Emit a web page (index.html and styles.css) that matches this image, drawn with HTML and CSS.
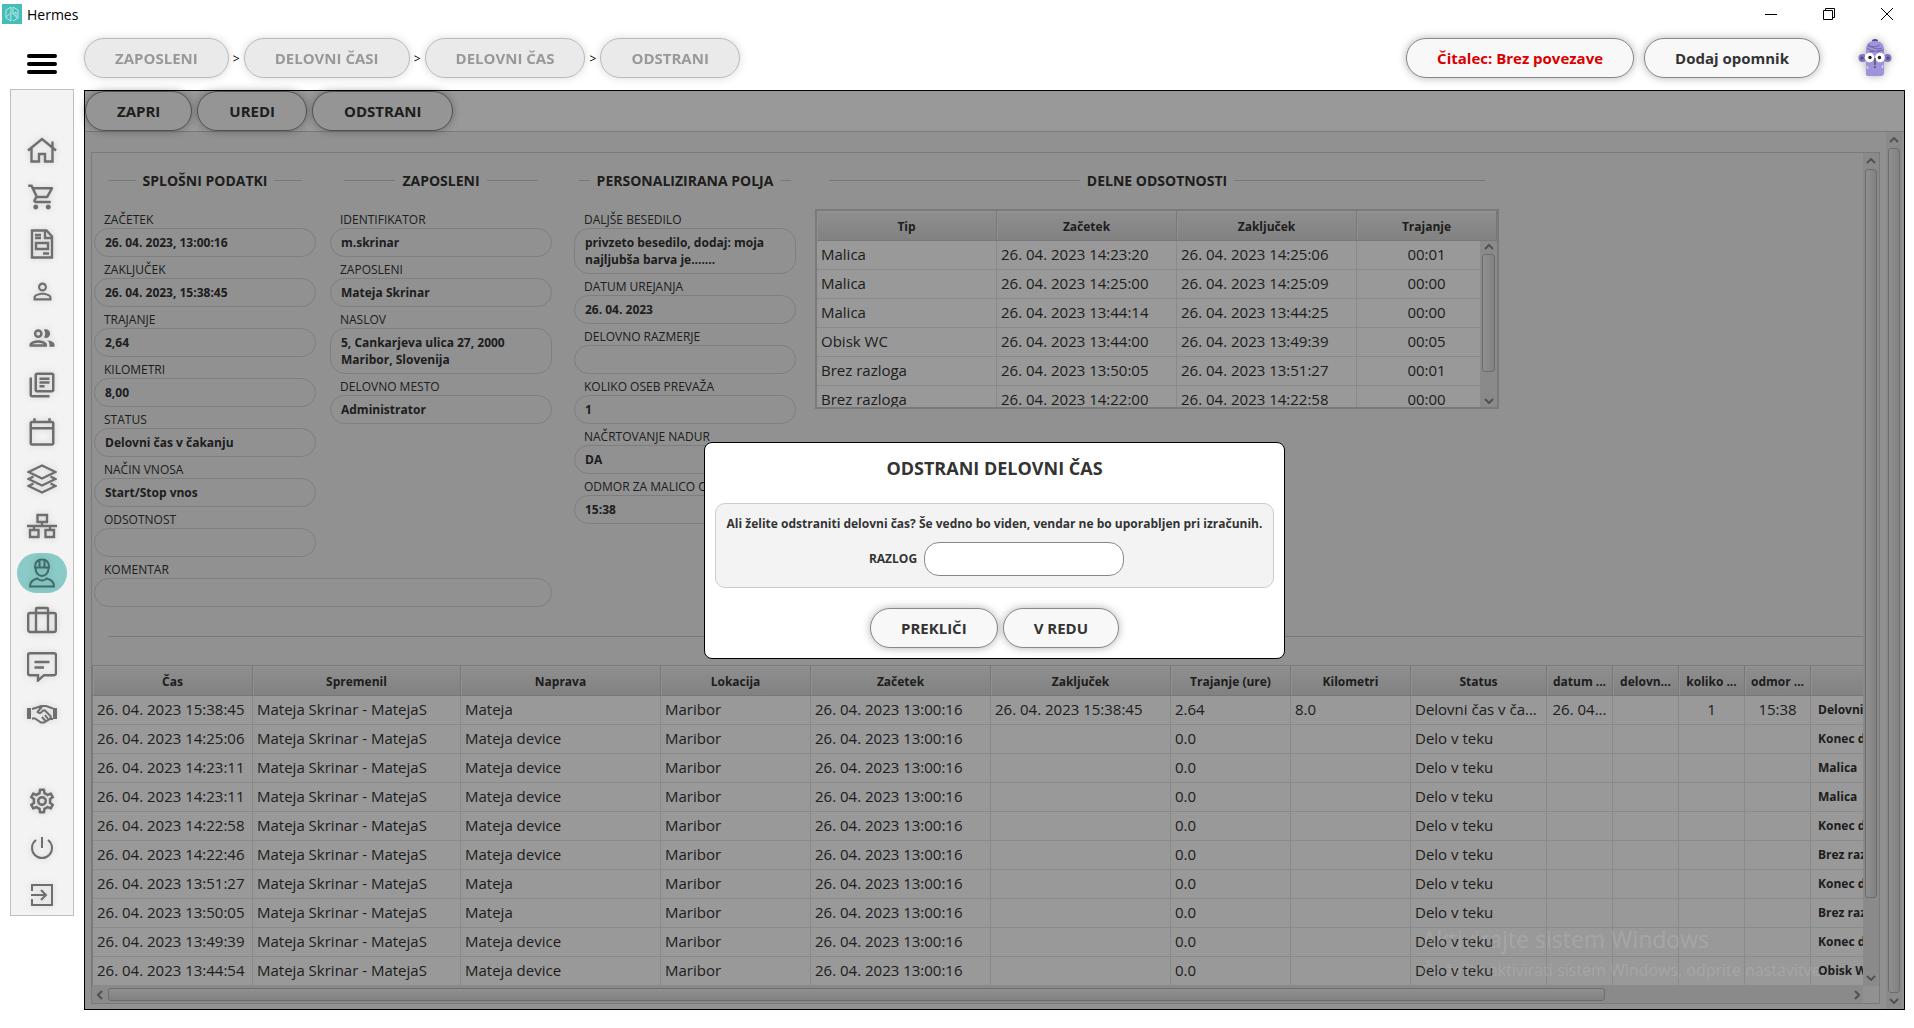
FILE: index.html
```
<!DOCTYPE html>
<html lang="sl">
<head>
  <meta charset="UTF-8">
  <meta name="viewport" content="width=device-width, initial-scale=1.0">
  <title>Hermes</title>
  <link rel="stylesheet" href="styles.css">
</head>
<body>
  <div class="titlebar">
    <svg class="logo" viewBox="0 0 20 20"><rect width="20" height="20" fill="#45bdb8"/><path d="M9 3 4 6v8l5 3V3zM11 3l5 3v8l-5 3M11 3v7l5 4M4 13l5-4M11 10l3-2v5" fill="none" stroke="#b9e8e5" stroke-width="1"/></svg>
    <span class="app-name">Hermes</span>
    <div class="window-buttons">
      <button type="button" aria-label="Pomanjšaj"><svg viewBox="0 0 14 14"><path d="M1 7.500h12"/></svg></button>
      <button type="button" aria-label="Obnovi"><svg viewBox="0 0 14 14"><path d="M1.500 3.500h9v9h-9zM3.500 3.500v-2h9v9h-2"/></svg></button>
      <button type="button" aria-label="Zapri okno"><svg viewBox="0 0 14 14"><path d="M1 1l12 12M13 1L1 13"/></svg></button>
    </div>
  </div>

  <header class="topbar">
    <button type="button" class="burger" aria-label="Meni"><i></i><i></i><i></i></button>
    <nav class="crumbs">
      <button type="button" class="btn" disabled>ZAPOSLENI</button><span>&gt;</span>
      <button type="button" class="btn" disabled>DELOVNI ČASI</button><span>&gt;</span>
      <button type="button" class="btn" disabled>DELOVNI ČAS</button><span>&gt;</span>
      <button type="button" class="btn" disabled>ODSTRANI</button>
    </nav>
    <button type="button" class="btn alert">Čitalec: Brez povezave</button>
    <button type="button" class="btn">Dodaj opomnik</button>
    <svg class="avatar" viewBox="0 0 34 40">
      <ellipse cx="17" cy="3" rx="3" ry="2" fill="#51458a"/>
      <circle cx="4.500" cy="20" r="4" fill="#8076bd"/><circle cx="29.500" cy="20" r="4" fill="#8076bd"/>
      <circle cx="4" cy="20" r="1.500" fill="#4e4585"/><circle cx="30" cy="20" r="1.500" fill="#4e4585"/>
      <path d="M8 12C8 5 12 3 17 3s9 2 9 9v24q-1 2-3 2H11q-3 0-3-2z" fill="#9f94da"/>
      <path d="M10 8c5 2 10 0 12-1M9 10c6 5 12 3 17 2M10 6c4 4 9 6 14 4M11 14l5-1M19 14l4-2" fill="none" stroke="#665b9f" stroke-width="0.800"/>
      <circle cx="11.500" cy="19.500" r="4.800" fill="#fff"/><circle cx="22" cy="19.500" r="4.800" fill="#fff"/>
      <circle cx="12" cy="19.500" r="1.700" fill="#222"/><circle cx="21.500" cy="19.500" r="1.700" fill="#222"/>
      <path d="M17 20v7M16 29h2" stroke="#333" stroke-width="1"/>
      <path d="M9 28l1 3M25 27l-1 3" stroke="#d3ccf5" stroke-width="1.500"/>
    </svg>
  </header>

  <div class="layout">
    <nav class="sidebar">
      <a href="#" aria-label="Domov"><svg class="line" viewBox="0 0 30 30"><path d="M1 15.500 15 4l14 11.500M4.500 13.500v13H12V19h6v7.500h7.500v-13M25.500 6.500V12"/></svg></a>
      <a href="#" aria-label="Košarica"><svg viewBox="0 0 24 24"><path d="M15.550 13c.75 0 1.410-.41 1.750-1.030l3.580-6.490A.996.996 0 0 0 20.010 4H5.210l-.94-2H1v2h2l3.600 7.590-1.350 2.440C4.520 15.370 5.480 17 7 17h12v-2H7l1.100-2h7.450zM6.160 6h12.150l-2.760 5H8.530L6.160 6zM7 18c-1.100 0-1.990.9-1.990 2S5.900 22 7 22s2-.9 2-2-.9-2-2-2zm10 0c-1.100 0-1.990.9-1.990 2s.89 2 1.990 2 2-.9 2-2-.9-2-2-2z"/></svg></a>
      <a href="#" aria-label="Dokumenti"><svg class="line" viewBox="0 0 30 30"><path d="M5 1.500h14.500L25 7.500v21H5z"/><path d="M18 2v7h7M8 6h6M8 9h6M16 24.500h6" /><path d="M9 14h12v6H9z"/></svg></a>
      <a href="#" aria-label="Oseba"><svg class="small" viewBox="0 0 24 24"><path d="M12 5.900c1.160 0 2.100.94 2.100 2.100s-.94 2.100-2.100 2.100S9.900 9.160 9.900 8s.94-2.100 2.100-2.100m0 9c2.970 0 6.100 1.460 6.100 2.100v1.100H5.900V17c0-.64 3.130-2.100 6.100-2.100M12 4C9.790 4 8 5.790 8 8s1.790 4 4 4 4-1.790 4-4-1.790-4-4-4zm0 9c-2.670 0-8 1.340-8 4v3h16v-3c0-2.660-5.330-4-8-4z"/></svg></a>
      <a href="#" aria-label="Skupine"><svg viewBox="0 0 24 24"><path d="M9 13.750c-2.340 0-7 1.170-7 3.500V19h14v-1.750c0-2.330-4.660-3.500-7-3.500zM4.340 17c.84-.58 2.870-1.250 4.660-1.250s3.820.67 4.660 1.250H4.340zM9 12c1.930 0 3.500-1.570 3.500-3.500S10.930 5 9 5 5.500 6.570 5.500 8.500 7.070 12 9 12zm0-5c.83 0 1.500.67 1.500 1.500S9.830 10 9 10s-1.500-.67-1.500-1.500S8.170 7 9 7zm7.040 6.810c1.160.84 1.960 1.960 1.960 3.440V19h4v-1.750c0-2.020-3.500-3.170-5.960-3.440zM15 12c1.930 0 3.500-1.570 3.500-3.500S16.930 5 15 5c-.54 0-1.040.13-1.500.35.63.89 1 1.980 1 3.150s-.37 2.260-1 3.150c.46.22.96.35 1.500.35z"/></svg></a>
      <a href="#" aria-label="Knjižnica"><svg viewBox="0 0 24 24"><path d="M4 6H2v14c0 1.100.9 2 2 2h14v-2H4V6zm16-4H8c-1.100 0-2 .9-2 2v12c0 1.100.9 2 2 2h12c1.100 0 2-.9 2-2V4c0-1.100-.9-2-2-2zm0 14H8V4h12v12zM10 9h8v2h-8zm0 3h4v2h-4zm0-6h8v2h-8z"/></svg></a>
      <a href="#" aria-label="Koledar"><svg viewBox="0 0 24 24"><path d="M20 3h-1V1h-2v2H7V1H5v2H4c-1.100 0-2 .9-2 2v16c0 1.100.9 2 2 2h16c1.100 0 2-.9 2-2V5c0-1.100-.9-2-2-2zm0 18H4V10h16v11zm0-13H4V5h16v3z"/></svg></a>
      <a href="#" aria-label="Sloji"><svg class="line" viewBox="0 0 30 30"><path d="M15 1.500 28.500 8 15 14.500 1.500 8zM6.500 12.500l-5 2.500L15 21.500 28.500 15l-5-2.500M6.500 19.500l-5 2.500L15 28.500 28.500 22l-5-2.500"/></svg></a>
      <a href="#" aria-label="Organizacija"><svg class="line" viewBox="0 0 30 30"><path d="M10.500 4h9.500v7h-9.500zM3 19h8.500v7H3zM18.500 19H27v7h-8.500zM15 11v4M0 15h30M7 15v4M23 15v4"/></svg></a>
      <a href="#" class="active" aria-label="Zaposleni"><svg class="line thin" viewBox="0 0 30 30"><path d="M7 9.500h16M8 9c0-5 3-7.500 7-7.500S22 4 22 9M12.500 2.500V9M17.500 2.500V9M8.500 10c0 5 3 8 6.500 8s6.500-3 6.500-8M3 28.500c0-5 2.500-7 7.500-8 2 2.500 7 2.500 9 0 5 1 7.500 3 7.500 8z"/></svg></a>
      <a href="#" aria-label="Potovanja"><svg class="line" viewBox="0 0 30 30"><rect x="1.200" y="8" width="27.600" height="19" rx="2"/><path d="M9 27V4q0-1 1-1h10q1 0 1 1v23"/></svg></a>
      <a href="#" aria-label="Sporočila"><svg class="line" viewBox="0 0 30 30"><path d="M3 1.200h24q2 0 2 2v18q0 2-2 2H17L11 28.500v-5.300H3q-2 0-2-2v-18q0-2 2-2zM7.500 10h15M7.500 15.500H17"/></svg></a>
      <a href="#" aria-label="Partnerji"><svg class="line thin" viewBox="0 0 30 30"><path d="M0 9h4v11H0zM26 9h4v11h-4z" class="fill"/><path d="M5 10l5-1.500L14 7h5l7 2.500M5 19.500h3l6 4 3 0 6-3.500h3M15 7.500l-4.500 5.500c1.500 2 4 1 5.500-1.500h2l5.500 5.500q1 2-1 3M18 16l3 4M15 18l3.500 4"/></svg></a>
      <a href="#" class="gap" aria-label="Nastavitve"><svg viewBox="0 0 24 24"><path d="M19.430 12.980c.04-.32.07-.64.07-.98 0-.34-.03-.66-.07-.98l2.110-1.650c.19-.15.24-.42.12-.64l-2-3.460c-.09-.16-.26-.25-.44-.25-.06 0-.12.010-.17.030l-2.490 1c-.52-.4-1.080-.73-1.690-.98l-.38-2.650C14.460 2.180 14.250 2 14 2h-4c-.25 0-.46.18-.49.42l-.38 2.650c-.61.25-1.170.59-1.690.98l-2.490-1c-.06-.02-.12-.03-.18-.03-.17 0-.34.09-.43.25l-2 3.460c-.13.22-.07.49.12.64l2.110 1.650c-.04.32-.07.65-.07.98 0 .33.030.66.070.98l-2.110 1.650c-.19.15-.24.42-.12.64l2 3.460c.09.16.26.25.44.25.06 0 .12-.01.17-.03l2.490-1c.52.4 1.080.73 1.690.98l.38 2.650c.03.24.24.42.49.42h4c.25 0 .46-.18.49-.42l.38-2.650c.61-.25 1.170-.59 1.690-.98l2.490 1c.06.020.12.030.18.030.17 0 .34-.09.43-.25l2-3.460c.12-.22.070-.49-.12-.64l-2.110-1.650zm-1.980-1.710c.04.31.050.52.050.73 0 .21-.02.43-.05.73l-.14 1.130.89.7 1.080.84-.7 1.210-1.270-.51-1.040-.42-.9.68c-.43.32-.84.56-1.250.73l-1.060.43-.16 1.130-.2 1.350h-1.400l-.19-1.350-.16-1.130-1.060-.43c-.43-.18-.83-.41-1.230-.71l-.91-.7-1.060.43-1.270.51-.7-1.210 1.080-.84.89-.7-.14-1.130c-.03-.31-.05-.54-.05-.74s.02-.43.050-.73l.14-1.130-.89-.7-1.080-.84.7-1.210 1.270.51 1.040.42.9-.68c.43-.32.84-.56 1.250-.73l1.060-.43.16-1.130.2-1.350h1.390l.19 1.350.16 1.130 1.060.43c.43.18.83.41 1.230.71l.91.7 1.060-.43 1.270-.51.7 1.210-1.070.85-.89.7.14 1.130zM12 8c-2.210 0-4 1.790-4 4s1.790 4 4 4 4-1.790 4-4-1.790-4-4-4zm0 6c-1.100 0-2-.9-2-2s.9-2 2-2 2 .9 2 2-.9 2-2 2z"/></svg></a>
      <a href="#" aria-label="Izklop"><svg class="line thin" viewBox="0 0 30 30"><path d="M15 4v11M9 7a10 10 0 1 0 12 0"/></svg></a>
      <a href="#" aria-label="Odjava"><svg class="line thin" viewBox="0 0 30 30"><path d="M5 11V5h20v20H5v-6M4 15h15M14 10l5 5-5 5"/></svg></a>
    </nav>

    <main class="panel">
      <div class="toolbar">
        <button type="button" class="btn">ZAPRI</button>
        <button type="button" class="btn">UREDI</button>
        <button type="button" class="btn">ODSTRANI</button>
      </div>
      <div class="body">
        <div class="content">
          <div class="view">
            <div class="details">
              <div class="pair">
                <section>
                  <h2><span>SPLOŠNI PODATKI</span></h2>
                  <dl>
                    <dt>ZAČETEK</dt><dd>26. 04. 2023, 13:00:16</dd>
                    <dt>ZAKLJUČEK</dt><dd>26. 04. 2023, 15:38:45</dd>
                    <dt>TRAJANJE</dt><dd>2,64</dd>
                    <dt>KILOMETRI</dt><dd>8,00</dd>
                    <dt>STATUS</dt><dd>Delovni čas v čakanju</dd>
                    <dt>NAČIN VNOSA</dt><dd>Start/Stop vnos</dd>
                    <dt>ODSOTNOST</dt><dd></dd>
                  </dl>
                </section>
                <section>
                  <h2><span>ZAPOSLENI</span></h2>
                  <dl>
                    <dt>IDENTIFIKATOR</dt><dd>m.skrinar</dd>
                    <dt>ZAPOSLENI</dt><dd>Mateja Skrinar</dd>
                    <dt>NASLOV</dt><dd>5, Cankarjeva ulica 27, 2000 Maribor, Slovenija</dd>
                    <dt>DELOVNO MESTO</dt><dd>Administrator</dd>
                  </dl>
                </section>
                <dl class="comment">
                  <dt>KOMENTAR</dt><dd></dd>
                </dl>
              </div>
              <section class="custom">
                <h2><span>PERSONALIZIRANA POLJA</span></h2>
                <dl>
                  <dt>DALJŠE BESEDILO</dt><dd>privzeto besedilo, dodaj: moja najljubša barva je.......</dd>
                  <dt>DATUM UREJANJA</dt><dd>26. 04. 2023</dd>
                  <dt>DELOVNO RAZMERJE</dt><dd></dd>
                  <dt>KOLIKO OSEB PREVAŽA</dt><dd>1</dd>
                  <dt>NAČRTOVANJE NADUR</dt><dd>DA</dd>
                  <dt>ODMOR ZA MALICO OD</dt><dd>15:38</dd>
                </dl>
              </section>
              <section class="absences">
                <h2><span>DELNE ODSOTNOSTI</span></h2>
                <div class="absence-box">
                  <table>
                    <colgroup><col class="w180"><col class="w180"><col class="w180"><col class="w140"></colgroup>
                    <thead><tr><th>Tip</th><th>Začetek</th><th>Zaključek</th><th>Trajanje</th></tr></thead>
                    <tbody>
                      <tr><td>Malica</td><td>26. 04. 2023 14:23:20</td><td>26. 04. 2023 14:25:06</td><td class="mid">00:01</td></tr>
                      <tr><td>Malica</td><td>26. 04. 2023 14:25:00</td><td>26. 04. 2023 14:25:09</td><td class="mid">00:00</td></tr>
                      <tr><td>Malica</td><td>26. 04. 2023 13:44:14</td><td>26. 04. 2023 13:44:25</td><td class="mid">00:00</td></tr>
                      <tr><td>Obisk WC</td><td>26. 04. 2023 13:44:00</td><td>26. 04. 2023 13:49:39</td><td class="mid">00:05</td></tr>
                      <tr><td>Brez razloga</td><td>26. 04. 2023 13:50:05</td><td>26. 04. 2023 13:51:27</td><td class="mid">00:01</td></tr>
                      <tr><td>Brez razloga</td><td>26. 04. 2023 14:22:00</td><td>26. 04. 2023 14:22:58</td><td class="mid">00:00</td></tr>
                    </tbody>
                  </table>
                  <div class="scroll over">
                    <svg viewBox="0 0 10 6"><path d="M1 5l4-4 4 4"/></svg>
                    <div class="track"><div class="thumb" style="height: 84%"></div></div>
                    <svg viewBox="0 0 10 6"><path d="M1 1l4 4 4-4"/></svg>
                  </div>
                </div>
              </section>
            </div>
            <hr>
            <table class="history">
              <colgroup><col class="w160"><col class="w208"><col class="w200"><col class="w150"><col class="w180"><col class="w180"><col class="w120"><col class="w120"><col class="w136"><col class="w66"><col class="w66"><col class="w66"><col class="w66"><col></colgroup>
              <thead><tr><th>Čas</th><th>Spremenil</th><th>Naprava</th><th>Lokacija</th><th>Začetek</th><th>Zaključek</th><th>Trajanje (ure)</th><th>Kilometri</th><th>Status</th><th>datum ...</th><th>delovn...</th><th>koliko ...</th><th>odmor ...</th><th></th></tr></thead>
              <tbody>
                <tr><td>26. 04. 2023 15:38:45</td><td>Mateja Skrinar - MatejaS</td><td>Mateja</td><td>Maribor</td><td>26. 04. 2023 13:00:16</td><td>26. 04. 2023 15:38:45</td><td>2.64</td><td>8.0</td><td>Delovni čas v ča...</td><td class="mid">26. 04...</td><td></td><td class="mid">1</td><td class="mid">15:38</td><td class="event">Delovni čas</td></tr>
                <tr><td>26. 04. 2023 14:25:06</td><td>Mateja Skrinar - MatejaS</td><td>Mateja device</td><td>Maribor</td><td>26. 04. 2023 13:00:16</td><td></td><td>0.0</td><td></td><td>Delo v teku</td><td></td><td></td><td></td><td></td><td class="event">Konec dela</td></tr>
                <tr><td>26. 04. 2023 14:23:11</td><td>Mateja Skrinar - MatejaS</td><td>Mateja device</td><td>Maribor</td><td>26. 04. 2023 13:00:16</td><td></td><td>0.0</td><td></td><td>Delo v teku</td><td></td><td></td><td></td><td></td><td class="event">Malica</td></tr>
                <tr><td>26. 04. 2023 14:23:11</td><td>Mateja Skrinar - MatejaS</td><td>Mateja device</td><td>Maribor</td><td>26. 04. 2023 13:00:16</td><td></td><td>0.0</td><td></td><td>Delo v teku</td><td></td><td></td><td></td><td></td><td class="event">Malica</td></tr>
                <tr><td>26. 04. 2023 14:22:58</td><td>Mateja Skrinar - MatejaS</td><td>Mateja device</td><td>Maribor</td><td>26. 04. 2023 13:00:16</td><td></td><td>0.0</td><td></td><td>Delo v teku</td><td></td><td></td><td></td><td></td><td class="event">Konec dela</td></tr>
                <tr><td>26. 04. 2023 14:22:46</td><td>Mateja Skrinar - MatejaS</td><td>Mateja device</td><td>Maribor</td><td>26. 04. 2023 13:00:16</td><td></td><td>0.0</td><td></td><td>Delo v teku</td><td></td><td></td><td></td><td></td><td class="event">Brez razloga</td></tr>
                <tr><td>26. 04. 2023 13:51:27</td><td>Mateja Skrinar - MatejaS</td><td>Mateja</td><td>Maribor</td><td>26. 04. 2023 13:00:16</td><td></td><td>0.0</td><td></td><td>Delo v teku</td><td></td><td></td><td></td><td></td><td class="event">Konec dela</td></tr>
                <tr><td>26. 04. 2023 13:50:05</td><td>Mateja Skrinar - MatejaS</td><td>Mateja</td><td>Maribor</td><td>26. 04. 2023 13:00:16</td><td></td><td>0.0</td><td></td><td>Delo v teku</td><td></td><td></td><td></td><td></td><td class="event">Brez razloga</td></tr>
                <tr><td>26. 04. 2023 13:49:39</td><td>Mateja Skrinar - MatejaS</td><td>Mateja device</td><td>Maribor</td><td>26. 04. 2023 13:00:16</td><td></td><td>0.0</td><td></td><td>Delo v teku</td><td></td><td></td><td></td><td></td><td class="event">Konec dela</td></tr>
                <tr><td>26. 04. 2023 13:44:54</td><td>Mateja Skrinar - MatejaS</td><td>Mateja device</td><td>Maribor</td><td>26. 04. 2023 13:00:16</td><td></td><td>0.0</td><td></td><td>Delo v teku</td><td></td><td></td><td></td><td></td><td class="event">Obisk WC</td></tr>
              </tbody>
            </table>
          </div>
          <div class="scroll">
            <svg viewBox="0 0 10 6"><path d="M1 5l4-4 4 4"/></svg>
            <div class="track"><div class="thumb" style="height: 91%"></div></div>
            <svg viewBox="0 0 10 6"><path d="M1 1l4 4 4-4"/></svg>
          </div>
          <div class="scroll across">
            <svg viewBox="0 0 6 10"><path d="M5 1L1 5l4 4"/></svg>
            <div class="track"><div class="thumb" style="width: 86%"></div></div>
            <svg viewBox="0 0 6 10"><path d="M1 1l4 4-4 4"/></svg>
          </div>
        </div>
        <div class="scroll">
          <svg viewBox="0 0 10 6"><path d="M1 5l4-4 4 4"/></svg>
          <div class="track"><div class="thumb" style="height: 100%"></div></div>
          <svg viewBox="0 0 10 6"><path d="M1 1l4 4 4-4"/></svg>
        </div>
      </div>

      <div class="overlay">
        <form class="dialog" role="dialog" aria-labelledby="dialog-title">
          <h1 id="dialog-title">ODSTRANI DELOVNI ČAS</h1>
          <div class="dialog-box">
            <p>Ali želite odstraniti delovni čas? Še vedno bo viden, vendar ne bo uporabljen pri izračunih.</p>
            <div class="reason">
              <label for="reason">RAZLOG</label>
              <input type="text" id="reason">
            </div>
          </div>
          <div class="dialog-buttons">
            <button type="button" class="btn">PREKLIČI</button>
            <button type="button" class="btn">V REDU</button>
          </div>
        </form>
      </div>
    </main>
  </div>

  <div class="watermark">
    <div class="big">Aktivirajte sistem Windows</div>
    <div>Če želite aktivirati sistem Windows, odprite nastavitve.</div>
  </div>
</body>
</html>
```

FILE: styles.css
```
* { box-sizing: border-box; }
body { margin: 0; background: #fff; color: #333; font-family: 'Open Sans', 'Noto Sans', sans-serif; font-size: 12px; position: relative; }
button { font-family: inherit; }

.titlebar { display: flex; align-items: center; height: 28px; padding: 0 0 0 2px; color: #000; }
.logo { width: 20px; height: 20px; }
.app-name { margin-left: 5px; font-size: 14px; }
.window-buttons { display: flex; margin-left: auto; }
.window-buttons button { width: 58px; height: 28px; padding: 0 0 0 4px; border: 0; background: none; }
.window-buttons svg { width: 14px; height: 14px; display: block; margin: 0 auto; fill: none; stroke: #000; stroke-width: 1; }

.topbar { display: flex; align-items: center; height: 60px; padding: 0 22px 0 27px; }
.burger { display: flex; flex-direction: column; gap: 4px; width: 30px; margin: 12px 27px 0 0; padding: 0; border: 0; background: none; }
.burger i { height: 4px; width: 30px; background: #000; border-radius: 2px; }
.crumbs { display: flex; align-items: center; margin-right: auto; }
.crumbs span { width: 15px; text-align: center; color: #000; }
.btn { height: 40px; padding: 0 30px; border: 1px solid #888; border-radius: 20px; background: #f8f8f8; color: #333; font-size: 15px; font-weight: bold; white-space: nowrap; box-shadow: 0 0 8px rgba(0,0,0,0.3); }
.btn:disabled { opacity: 0.5; background: #d6d6d6; border-color: #777; }
.btn.alert { color: #d90000; margin-right: 10px; }
.avatar { width: 34px; height: 40px; margin-left: 38px; filter: drop-shadow(0 0 4px rgba(0,0,0,0.3)); }

.layout { display: flex; align-items: flex-start; gap: 10px; padding: 1px 9px 18px 10px; }
.sidebar { display: flex; flex-direction: column; align-items: center; gap: 7px; width: 64px; flex: none; padding: 40px 0 0; border: 1px solid #bfbfbf; background: #f3f3f3; }
.sidebar a { display: flex; align-items: center; justify-content: center; width: 50px; height: 40px; border-radius: 20px; color: #6e6e6e; }
.sidebar a.active { background: #8acbc7; color: #3f6b69; }
.sidebar a.gap { margin-top: 40px; }
.sidebar svg { width: 30px; height: 30px; fill: currentColor; filter: drop-shadow(0 0 3px rgba(0,0,0,0.15)); }
.sidebar svg.small { width: 27px; height: 27px; }
.sidebar svg.line { fill: none; stroke: currentColor; stroke-width: 2.4; }
.sidebar svg.thin { stroke-width: 2; }
.sidebar .fill { fill: currentColor; stroke: none; }

.panel { position: relative; flex: 1; min-width: 0; margin-top: 1px; border: 1px solid #000; background: #f2f2f2; }
.toolbar { display: flex; gap: 5px; height: 41px; background: #fff; border-bottom: 1px solid #cbcbcb; }
.toolbar .btn { padding: 0 31px; }
.body { display: flex; padding-right: 2px; }
.content { display: grid; grid-template-columns: 1fr 16px; flex: 1; min-width: 0; margin: 20px 6px 5px 6px; border: 1px solid #cbcbcb; }
.view { min-width: 0; overflow: hidden; }
.details { display: flex; align-items: flex-start; padding-left: 2px; }
.pair { display: grid; grid-template-columns: 222px 222px; column-gap: 14px; }
.comment { grid-column: 1 / 3; }
.custom { width: 222px; margin-left: 22px; }
.absences { width: 684px; margin-left: 19px; }

h2 { display: flex; align-items: center; gap: 7px; height: 54px; margin: 0; padding: 0 14px; font-size: 14px; white-space: nowrap; }
h2::before, h2::after { content: ""; flex: 1; height: 1px; background: #cbcbcb; }
.custom h2 { padding: 0 5px; }
dl { margin: 0; }
dt { padding: 4px 10px 0; line-height: 17px; }
dd { margin: 0; padding: 5px 10px; min-height: 29px; border: 1px solid #d2d2d2; border-radius: 15px; line-height: 17px; font-weight: bold; }
hr { height: 1px; margin: 29px 0 28px 16px; border: 0; background: #cbcbcb; }

table { table-layout: fixed; border-collapse: separate; border-spacing: 0; background: #fff; }
th { height: 30px; padding: 1px 0 0; border: 1px solid #c8c8c8; border-width: 0 1px 1px 0; background: linear-gradient(#efefef, #d8d8d8); box-shadow: inset 1px 1px #f4f4f4; font-size: 12px; }
td { height: 29px; padding: 0 4px 2px; border: 1px solid #e6e6e6; border-width: 0 1px 1px 0; font-size: 15px; line-height: 20px; white-space: nowrap; overflow: hidden; }
td.mid { text-align: center; }
td.event { padding: 0 0 0 7px; font-size: 12px; font-weight: bold; }
.w66 { width: 66px; }
.w120 { width: 120px; }
.w136 { width: 136px; }
.w140 { width: 140px; }
.w150 { width: 150px; }
.w160 { width: 160px; }
.w180 { width: 180px; }
.w200 { width: 200px; }
.w208 { width: 208px; }
.history { width: 2100px; border-top: 1px solid #cbcbcb; border-left: 1px solid #cbcbcb; }
.absence-box { position: relative; height: 200px; margin-top: 2px; border: 2px solid #cbcbcb; overflow: hidden; }
.absence-box table { width: 680px; }

.scroll { display: flex; flex-direction: column; align-items: center; gap: 5px; width: 16px; padding: 5px 2px; background: #e6e6e6; }
.scroll svg { flex: none; width: 10px; height: 6px; fill: none; stroke: #888; stroke-width: 2; }
.track { flex: 1; width: 100%; }
.thumb { border: 1px solid #b5b5b5; border-radius: 3px; background: linear-gradient(90deg, #f0f0f0, #d8d8d8); }
/* sits above the rows, below the table head */
.scroll.over { position: absolute; top: 30px; right: 0; bottom: 0; width: 17px; gap: 4px; padding: 3px 2px; }
.across { flex-direction: row; width: auto; height: 17px; padding: 2px 3px 2px 5px; }
.across svg { width: 6px; height: 10px; }
.across .track { height: 100%; width: auto; }
.across .thumb { height: 100%; background: linear-gradient(#f0f0f0, #d8d8d8); }

.overlay { position: absolute; inset: 0; display: flex; align-items: center; justify-content: center; background: rgba(0,0,0,0.4); }
.dialog { padding: 12px 10px 10px; border: 1px solid #000; border-radius: 8px; background: #fff; }
.dialog h1 { margin: 0 0 22px; font-size: 18px; line-height: 26px; text-align: center; }
.dialog-box { padding: 11px; border: 1px solid #ccc; border-radius: 10px; background: #f3f3f3; font-weight: bold; }
.dialog-box p { margin: 0 0 9px; line-height: 18px; }
.reason { display: flex; align-items: center; justify-content: center; gap: 7px; padding-left: 4px; }
.reason input { width: 200px; height: 34px; padding: 0 10px; border: 1px solid #888; border-radius: 15px; background: #fff; }
.dialog-buttons { display: flex; justify-content: center; gap: 5px; margin-top: 20px; }

.watermark { position: absolute; right: 54px; bottom: 45px; width: 438px; color: rgba(255,255,255,0.14); font-size: 16px; line-height: 26px; white-space: nowrap; pointer-events: none; }
.watermark .big { font-size: 23px; line-height: 36px; }
```
